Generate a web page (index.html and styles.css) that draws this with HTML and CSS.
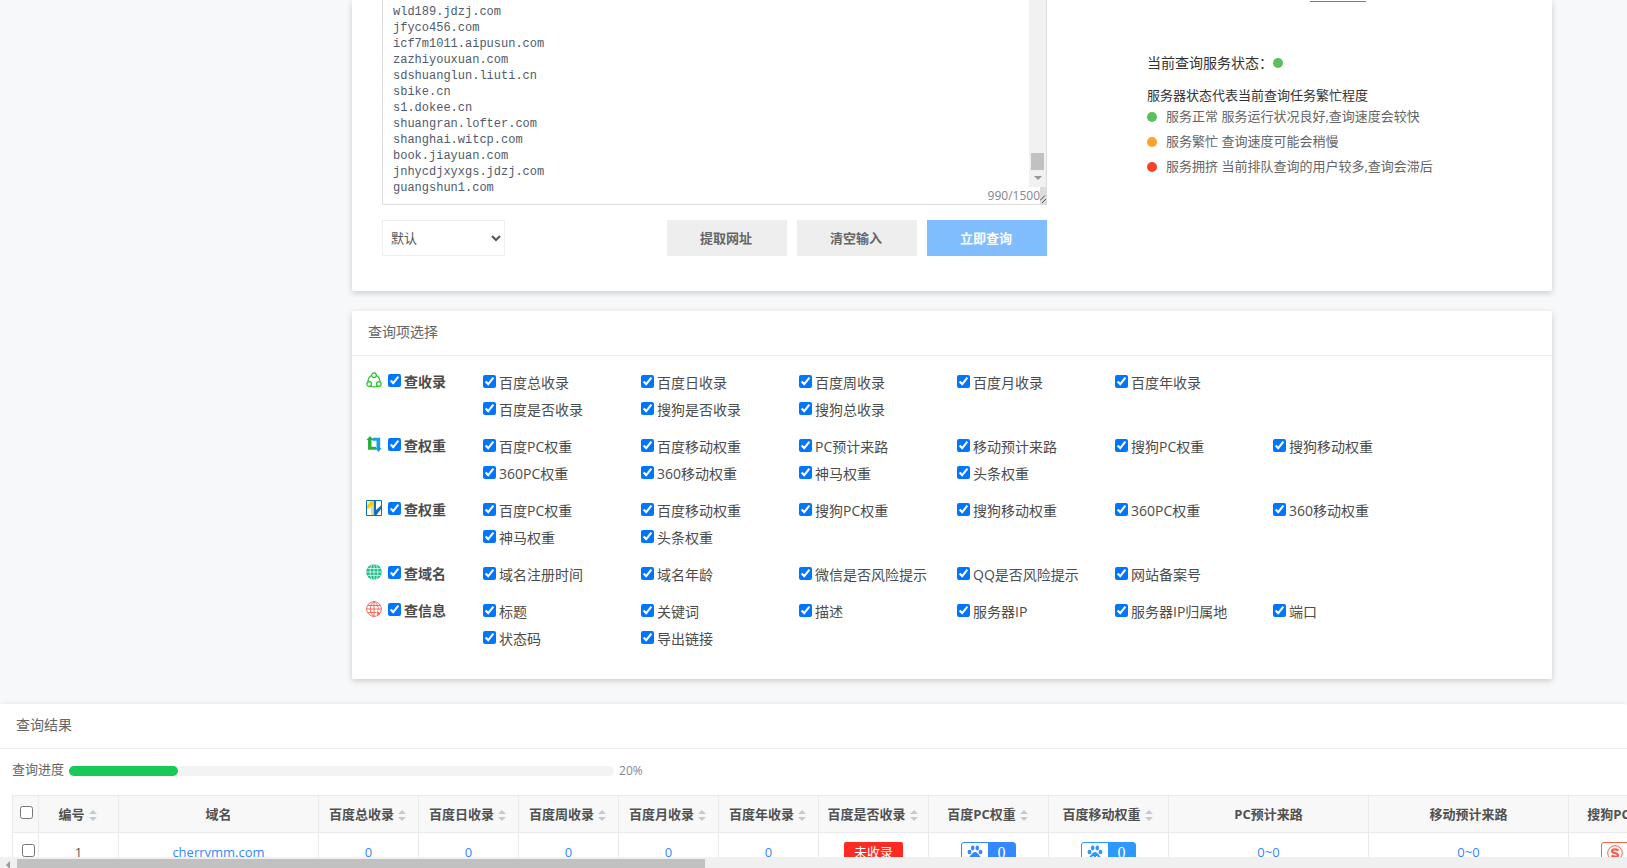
FILE: index.html
```html
<!DOCTYPE html>
<html lang="zh-CN">
<head>
<meta charset="utf-8">
<title>批量查询</title>
<link rel="stylesheet" href="styles.css">
</head>
<body>
<main class="page">
  <section class="card query">
    <div class="query-form">
      <div class="input-wrap">
        <textarea class="domains" aria-label="域名列表" spellcheck="false">wld189.jdzj.com
jfyco456.com
icf7m1011.aipusun.com
zazhiyouxuan.com
sdshuanglun.liuti.cn
sbike.cn
s1.dokee.cn
shuangran.lofter.com
shanghai.witcp.com
book.jiayuan.com
jnhycdjxyxgs.jdzj.com
guangshun1.com</textarea>
        <div class="vbar"><span class="vbar-thumb"></span><span class="vbar-arrow"></span></div>
        <div class="grip"><svg width="7" height="17" viewBox="0 0 7 17"><path d="M0 13.500L5 8.500M2 16L6 12" stroke="#555" fill="none"/></svg></div>
        <span class="count">990/1500</span>
      </div>
      <div class="actions">
        <select class="mode" aria-label="查询模式"><option>默认</option></select>
        <button class="btn" type="button">提取网址</button>
        <button class="btn" type="button">清空输入</button>
        <button class="btn primary" type="button">立即查询</button>
      </div>
    </div>
    <aside class="status">
      <div class="tab-line"></div>
      <p class="status-now">当前查询服务状态：<i class="dot green"></i></p>
      <p class="status-desc">服务器状态代表当前查询任务繁忙程度</p>
      <ul class="status-list">
        <li><i class="dot green"></i>服务正常 服务运行状况良好,查询速度会较快</li>
        <li><i class="dot orange"></i>服务繁忙 查询速度可能会稍慢</li>
        <li><i class="dot red"></i>服务拥挤 当前排队查询的用户较多,查询会滞后</li>
      </ul>
    </aside>
  </section>

  <section class="card options">
    <h2 class="card-title">查询项选择</h2>
    <div class="groups">
      <div class="group">
        <svg class="gicon" viewBox="0 0 16 16" fill="none" stroke="#1fc41f" stroke-width="1.200"><circle cx="8" cy="3.200" r="2.300"/><circle cx="3.200" cy="12" r="2.300"/><circle cx="12.800" cy="12" r="2.300"/><path d="M5.800 3.200C3.500 4.500 2 7 2 9.800M10.200 3.200C12.500 4.500 14 7 14 9.800M4.500 14c2.300 1.200 4.700 1.200 7 0"/></svg>
        <label class="ghead"><input type="checkbox" checked>查收录</label>
        <div class="items">
          <label><input type="checkbox" checked>百度总收录</label><label><input type="checkbox" checked>百度日收录</label><label><input type="checkbox" checked>百度周收录</label><label><input type="checkbox" checked>百度月收录</label><label><input type="checkbox" checked>百度年收录</label><label class="first"><input type="checkbox" checked>百度是否收录</label><label><input type="checkbox" checked>搜狗是否收录</label><label><input type="checkbox" checked>搜狗总收录</label>
        </div>
      </div>
      <div class="group">
        <svg class="gicon" viewBox="0 0 16 16"><path fill="#27b03c" d="M4 0l3.500 4H5.500v6.800H10V13.800H2V4H.5z"/><path fill="#1a9fe0" d="M12.500 16L9 12h1.500V4.800H6.500V1.800h7.700V12h1.500z"/></svg>
        <label class="ghead"><input type="checkbox" checked>查权重</label>
        <div class="items">
          <label><input type="checkbox" checked>百度PC权重</label><label><input type="checkbox" checked>百度移动权重</label><label><input type="checkbox" checked>PC预计来路</label><label><input type="checkbox" checked>移动预计来路</label><label><input type="checkbox" checked>搜狗PC权重</label><label><input type="checkbox" checked>搜狗移动权重</label><label><input type="checkbox" checked>360PC权重</label><label><input type="checkbox" checked>360移动权重</label><label><input type="checkbox" checked>神马权重</label><label><input type="checkbox" checked>头条权重</label>
        </div>
      </div>
      <div class="group">
        <svg class="gicon" viewBox="0 0 16 16"><path fill="#fff" stroke="#0b71b8" d="M.5.500h15v15H.5z"/><path fill="#fc0" d="M5 1h3v14H6.500V5.500L1 9.500V5z"/><path fill="#ccc" d="M4.500 7.500l2-2V15h-1z"/><path fill="#0b71b8" d="M8 1h2v9l5-4.500V9l-4.500 6H8z"/></svg>
        <label class="ghead"><input type="checkbox" checked>查权重</label>
        <div class="items">
          <label><input type="checkbox" checked>百度PC权重</label><label><input type="checkbox" checked>百度移动权重</label><label><input type="checkbox" checked>搜狗PC权重</label><label><input type="checkbox" checked>搜狗移动权重</label><label><input type="checkbox" checked>360PC权重</label><label><input type="checkbox" checked>360移动权重</label><label><input type="checkbox" checked>神马权重</label><label><input type="checkbox" checked>头条权重</label>
        </div>
      </div>
      <div class="group">
        <svg class="gicon" viewBox="0 0 16 16"><circle cx="8" cy="8" r="7.800" fill="#1fc08a"/><path d="M8 0v16M0 8h16M1.500 4.500h13M1.500 11.500h13M6 .5C3.500 5 3.500 11 6 15.500M10 .5c2.500 4.500 2.500 10.500 0 15" fill="none" stroke="#fff" stroke-width=".7"/></svg>
        <label class="ghead"><input type="checkbox" checked>查域名</label>
        <div class="items">
          <label><input type="checkbox" checked>域名注册时间</label><label><input type="checkbox" checked>域名年龄</label><label><input type="checkbox" checked>微信是否风险提示</label><label><input type="checkbox" checked>QQ是否风险提示</label><label><input type="checkbox" checked>网站备案号</label>
        </div>
      </div>
      <div class="group">
        <svg class="gicon" viewBox="0 0 16 16" fill="none" stroke="#f4604f" stroke-width=".9"><circle cx="8" cy="8" r="7.400"/><path d="M8 .5v15M.5 8h15M2 4.500h12M2 11.500h8M8 .5C3 4 3 12 8 15.500M8 .5c4 3 5 6.500 4 9"/><path d="M11 10.500l3 2-2 1.500z" fill="#f4604f"/></svg>
        <label class="ghead"><input type="checkbox" checked>查信息</label>
        <div class="items">
          <label><input type="checkbox" checked>标题</label><label><input type="checkbox" checked>关键词</label><label><input type="checkbox" checked>描述</label><label><input type="checkbox" checked>服务器IP</label><label><input type="checkbox" checked>服务器IP归属地</label><label><input type="checkbox" checked>端口</label><label><input type="checkbox" checked>状态码</label><label><input type="checkbox" checked>导出链接</label>
        </div>
      </div>
    </div>
  </section>

  <section class="card results">
    <h2 class="card-title">查询结果</h2>
    <div class="progress">
      <span class="progress-name">查询进度</span>
      <div class="track"><div class="fill" style="width:20%"></div></div>
      <span class="percent">20%</span>
    </div>
    <table class="grid">
      <colgroup><col class="w26"><col class="w80"><col class="w200"><col class="w100"><col class="w100"><col class="w100"><col class="w100"><col class="w100"><col class="w110"><col class="w120"><col class="w120"><col class="w200"><col class="w200"><col class="w120"></colgroup>
      <thead><tr>
        <th class="pick-all"><input type="checkbox" aria-label="全选"></th>
        <th>编号<i class="sort"></i></th>
        <th>域名</th>
        <th>百度总收录<i class="sort"></i></th>
        <th>百度日收录<i class="sort"></i></th>
        <th>百度周收录<i class="sort"></i></th>
        <th>百度月收录<i class="sort"></i></th>
        <th>百度年收录<i class="sort"></i></th>
        <th>百度是否收录<i class="sort"></i></th>
        <th>百度PC权重<i class="sort"></i></th>
        <th>百度移动权重<i class="sort"></i></th>
        <th>PC预计来路</th>
        <th>移动预计来路</th>
        <th>搜狗PC权重<i class="sort"></i></th>
      </tr></thead>
      <tbody><tr>
        <td class="pick"><input type="checkbox" aria-label="选择 cherrymm.com"></td>
        <td>1</td>
        <td><a href="#">cherrymm.com</a></td>
        <td><a href="#">0</a></td><td><a href="#">0</a></td><td><a href="#">0</a></td><td><a href="#">0</a></td><td><a href="#">0</a></td>
        <td><span class="tag">未收录</span></td>
        <td><span class="rank"><svg viewBox="0 0 16 16"><ellipse cx="2.500" cy="7" rx="1.900" ry="2.200"/><ellipse cx="5.700" cy="3" rx="1.800" ry="2.400"/><ellipse cx="10.300" cy="3" rx="1.800" ry="2.400"/><ellipse cx="13.500" cy="7" rx="1.900" ry="2.200"/><path d="M8 7c2 0 3 2 4.500 3.500S14.500 15 12 15.500c-2 .4-6 .4-8 0-2.500-.5-2-3.500-.5-5S6 7 8 7z"/></svg><b>0</b></span></td>
        <td><span class="rank mobile"><svg viewBox="0 0 16 16"><ellipse cx="2.500" cy="7" rx="1.900" ry="2.200"/><ellipse cx="5.700" cy="3" rx="1.800" ry="2.400"/><ellipse cx="10.300" cy="3" rx="1.800" ry="2.400"/><ellipse cx="13.500" cy="7" rx="1.900" ry="2.200"/><path d="M8 7c2 0 3 2 4.500 3.500S14.500 15 12 15.500c-2 .4-6 .4-8 0-2.500-.5-2-3.500-.5-5S6 7 8 7z"/><path d="M6 15v-4l2 2 2-2v4" stroke="#fff" fill="none"/></svg><b>0</b></span></td>
        <td><a href="#">0~0</a></td><td><a href="#">0~0</a></td>
        <td><span class="rank sogou"><svg viewBox="0 0 16 16"><circle cx="8" cy="8" r="7.300" fill="none" stroke="#fa5f48"/><path d="M11.500 5.500C9 4 5 4 5 6.200S11 7.800 11 10s-4 2-6.500.5" fill="none" stroke="#fa5f48" stroke-width="2.200"/></svg><b>0</b></span></td>
      </tr></tbody>
    </table>
  </section>
</main>
<div class="hbar"><span class="hbar-arrow"></span><span class="hbar-thumb"></span></div>
</body>
</html>
```
FILE: styles.css
```css
* { box-sizing: border-box; }
body {
  margin: 0;
  height: 100vh;
  display: flex;
  flex-direction: column;
  overflow: hidden;
  background: #f7f8fa;
  color: #555;
  font: 14px/20px "Open Sans", "Noto Sans CJK SC", sans-serif;
}
.page { flex: 1; min-height: 0; overflow: hidden; }
h2, p, ul { margin: 0; padding: 0; font-weight: 400; }
ul { list-style: none; }
a { color: #3388ff; text-decoration: none; }
input[type="checkbox"] { width: 13px; height: 13px; margin: 0; flex: none; }

.card { background: #fff; border-radius: 2px; box-shadow: 0 2px 6px rgba(0, 0, 0, .18); }
.query, .options { margin: 0 75px 20px 352px; }
.card-title { padding: 11px 16px 13px; font-size: 14px; color: #666; border-bottom: 1px solid #eee; }

.query { display: flex; gap: 100px; padding: 0 30px 35px; }
.query-form { width: 665px; }
.input-wrap { position: relative; height: 205px; }
.domains {
  display: block;
  width: 100%;
  height: 100%;
  padding: 4px 10px 0;
  border: 1px solid #dcdcdc;
  border-top: 0;
  resize: none;
  overflow: hidden;
  background: #fff;
  color: #515a6e;
  font: 12px/16px "Liberation Mono", monospace;
}
.vbar { position: absolute; right: 1px; top: 0; width: 17px; height: 187px; background: #f1f1f1; }
.vbar-thumb { position: absolute; left: 2px; bottom: 17px; width: 13px; height: 17px; background: #c1c1c1; }
.vbar-arrow { position: absolute; left: 5px; bottom: 7px; border: 4px solid transparent; border-top-color: #999; border-bottom: 0; }
.grip { position: absolute; right: 0; bottom: 1px; width: 7px; height: 17px; background: #dcdcdc; }
.grip svg { display: block; }
.count { position: absolute; right: 7px; bottom: 1px; background: #fff; font-size: 12px; line-height: 17px; color: #808695; }

.actions { display: flex; gap: 10px; margin-top: 15px; }
.mode { width: 123px; height: 36px; margin-right: auto; padding: 0 4px; border: 1px solid #eee; background: #fff; color: #555; font: 13px "Open Sans", "Noto Sans CJK SC", sans-serif; }
.btn { width: 120px; height: 36px; padding: 0 2px 2px 0; border: 0; background: #eee; color: #666; font: 700 13px "Open Sans", "Noto Sans CJK SC", sans-serif; }
.primary { background: #80bdff; color: #fff; }

.status { flex: 1; font-size: 13px; color: #666; }
.tab-line { width: 56px; height: 2px; margin-left: 163px; border-bottom: 1px solid #2d8cf0; }
.status-now { display: flex; align-items: center; margin-top: 51px; font-size: 14px; color: #333; }
.status-desc { margin-top: 12px; color: #333; }
.status-list { margin-top: -1px; }
.status-list li { display: flex; align-items: center; gap: 9px; height: 25px; line-height: 25px; }
.dot { width: 10px; height: 10px; border-radius: 50%; flex: none; }
.green { background: #5bc05b; }
.orange { background: #ffa22d; }
.red { background: #fd4125; }

.groups { padding: 13px 14px 17px; color: #4c4c4c; }
.group { display: flex; margin-bottom: 10px; }
.gicon { width: 16px; height: 16px; margin-top: 3px; flex: none; }
.ghead { display: flex; align-items: center; gap: 3px; width: 95px; margin-left: 6px; height: 25px; font-weight: 700; }
.items { flex: 1; display: grid; grid-template-columns: repeat(6, 158px); }
.items label { display: flex; align-items: center; gap: 3px; height: 27px; white-space: nowrap; }
.items .first { grid-column: 1; }
.group input { margin-bottom: 2px; }

.results { margin-top: 25px; }
.progress { display: flex; align-items: center; gap: 5px; padding: 10px 12px 14px; font-size: 13px; color: #666; }
.progress-name { margin-bottom: 2px; }
.track { width: 545px; height: 10px; margin-top: 2px; border-radius: 5px; background: #f3f3f3; }
.fill { height: 100%; border-radius: 5px; background: #19c955; }
.percent { margin-top: 2px; font-size: 12px; color: #808695; }
.grid { table-layout: fixed; width: 1677px; margin-left: 12px; border-collapse: collapse; font-size: 13px; }
.grid th, .grid td { padding: 0; border: 1px solid #e8eaec; text-align: center; white-space: nowrap; vertical-align: middle; }
.grid th { height: 37px; background: #f8f8f9; color: #515151; font-weight: 700; }
.grid td { height: 38px; }
.grid input { vertical-align: middle; }
.pick-all input { margin: 0 0 5px 2px; }
.pick input { margin: 0 0 5px 5px; }
.w26 { width: 26px; } .w80 { width: 80px; } .w100 { width: 100px; } .w110 { width: 110px; } .w120 { width: 120px; } .w200 { width: 200px; }
.sort { display: inline-grid; gap: 3px; margin: 0 2px 0 4px; vertical-align: middle; }
.sort::before, .sort::after { content: ""; border: 4px solid transparent; }
.sort::before { border-top: 0; border-bottom-color: #c5c8ce; }
.sort::after { border-bottom: 0; border-top-color: #c5c8ce; }
.tag { display: inline-block; padding: 0 10px; border-radius: 2px; background: #ff2a22; color: #fff; vertical-align: middle; }
.rank { --tone: #3388ff; display: inline-flex; width: 55px; height: 20px; border: 1px solid var(--tone); border-radius: 3px; vertical-align: middle; }
.rank svg { width: 16px; height: 16px; margin: 2px 5px; fill: var(--tone); }
.rank b { flex: 1; background: var(--tone); color: #fff; font: 16px/20px "Liberation Serif", serif; height: 18px; }
.mobile { --tone: #2d98ff; }
.sogou { --tone: #fa5f48; }

.hbar { position: relative; height: 11px; background: #f0f0f0; flex: none; }
.hbar-arrow { position: absolute; left: 6px; top: 4px; border: 4px solid transparent; border-right-color: #999; border-left: 0; }
.hbar-thumb { position: absolute; left: 17px; top: 2px; width: 688px; height: 9px; background: #c1c1c1; }
```
